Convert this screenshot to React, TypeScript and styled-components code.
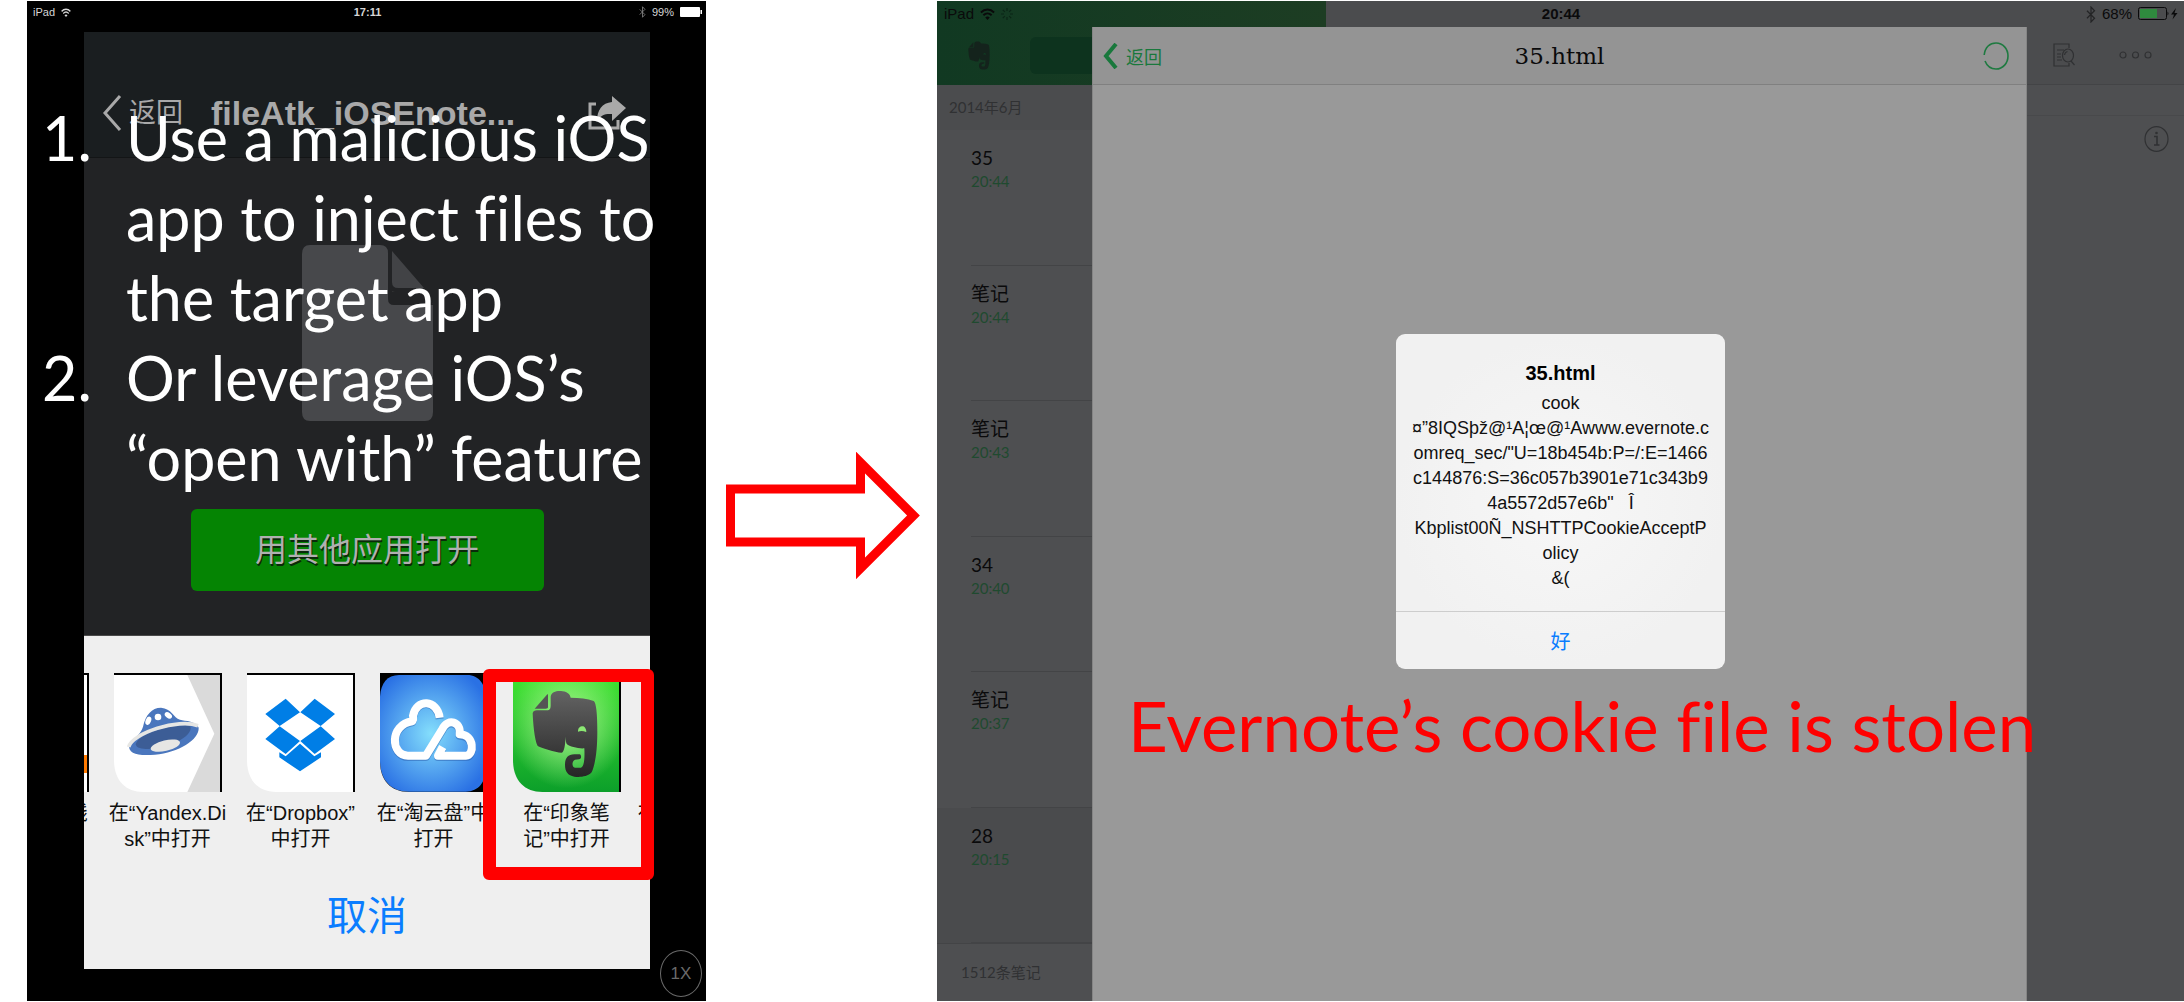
import React from "react";
import styled, { createGlobalStyle } from "styled-components";

const sans = `"Liberation Sans", "Noto Sans CJK SC", sans-serif`;
const humanist = `Lato, "Noto Sans CJK SC", sans-serif`;

const GlobalStyle = createGlobalStyle`
  *, *::before, *::after { box-sizing: border-box; }
  body { margin: 0; background: #fff; font-family: ${sans}; }
  button { border: 0; margin: 0; padding: 0; background: none; font: inherit; color: inherit; cursor: pointer; }
  ol, ul, p, h1, h2 { margin: 0; padding: 0; list-style: none; font-weight: 400; }
  svg { display: block; flex: none; }
`;

const Slide = styled.main`
  min-height: 100vh;
  display: grid;
  grid-template-columns: minmax(0, 679fr) minmax(0, 231fr) minmax(0, 1247fr);
  padding: 1px 0 1px 27px;
`;

/* ---------- status bars ---------- */

const StatusBar = styled.div<{ $size: number; $height: number; $pad: string }>`
  flex: none;
  height: ${(p) => p.$height}px;
  padding: ${(p) => p.$pad};
  display: grid;
  grid-template-columns: 1fr auto 1fr;
  align-items: center;
  font-size: ${(p) => p.$size}px;
  line-height: 16px;
`;

const StatusGroup = styled.div<{ $end?: boolean }>`
  display: flex;
  align-items: center;
  gap: 6px;
  justify-content: ${(p) => (p.$end ? "flex-end" : "flex-start")};
`;

const Clock = styled.strong`
  font-weight: 700;
`;

/* ---------- left tablet ---------- */

const LeftTablet = styled.section`
  position: relative;
  display: flex;
  flex-direction: column;
  background: #000;
  color: #d6d6d6;
  padding-bottom: 32px;
`;

const Phone = styled.div`
  flex: 1;
  margin: 0 56px 0 57px;
  display: flex;
  flex-direction: column;
  background: #222325;
`;

const PhoneHeader = styled.header`
  height: 126px;
  padding: 36px 24px 0 18px;
  display: flex;
  align-items: center;
  background: #1a1e20;
  border-bottom: 1px solid #131516;
  color: #a9a9a9;
`;

const PhoneBack = styled.button`
  flex: none;
  display: flex;
  align-items: center;
  gap: 7px;
  font-size: 27px;
  line-height: 36px;
`;

const PhoneTitle = styled.h1`
  flex: 1;
  margin-left: 28px;
  font-size: 34px;
  line-height: 44px;
  font-weight: 700;
  white-space: nowrap;
`;

const Preview = styled.div`
  flex: 1;
  display: flex;
  flex-direction: column;
  align-items: center;
  padding-top: 87px;
`;

const OpenButton = styled.button`
  margin-top: 88px;
  width: 353px;
  height: 82px;
  padding-bottom: 6px;
  border-radius: 6px;
  background: #058403;
  color: #b0b0b0;
  font-size: 32px;
  text-shadow: 1px 2px 0 #0a2a0a;
`;

const Sheet = styled.div`
  position: relative;
  padding-top: 37px;
  background: #efefef;
  border-top: 1px solid #4a4a4a;
  color: #111;
  display: flex;
  flex-direction: column;
`;

const AppRow = styled.ul`
  display: flex;
  justify-content: center;
  overflow: hidden;
`;

const AppItem = styled.li`
  flex: none;
  width: 133px;
`;

const AppButton = styled.button`
  width: 100%;
  display: flex;
  flex-direction: column;
  align-items: center;
  gap: 8px;
  font-size: 20px;
  line-height: 26px;
  white-space: nowrap;
`;

const Line = styled.span`
  display: block;
`;

const CancelButton = styled.button`
  margin-top: 10px;
  height: 107px;
  padding-bottom: 6px;
  color: #0a7dff;
  font-size: 40px;
`;

const Highlight = styled.div`
  position: absolute;
  top: 33px;
  right: -4px;
  width: 171px;
  height: 211px;
  border: 13px solid #f00;
  border-radius: 6px;
  pointer-events: none;
`;

const ZoomToggle = styled.button`
  position: absolute;
  right: 4px;
  bottom: 4px;
  width: 42px;
  height: 47px;
  border: 1px solid #6a6a6a;
  border-radius: 50%;
  color: #6a6a6a;
  font-size: 17px;
`;

const Steps = styled.ol`
  position: absolute;
  top: 97px;
  left: 15px;
  color: #fff;
  font-family: ${humanist};
  font-size: 61px;
  font-variant-ligatures: none;
  line-height: 80px;
  white-space: nowrap;
  pointer-events: none;
`;

const Step = styled.li`
  display: grid;
  grid-template-columns: 84px auto;
`;

/* ---------- arrow ---------- */

const ArrowCell = styled.div`
  display: flex;
  align-items: center;
  justify-content: center;
  padding: 30px 0 0 2px;
`;

/* ---------- right tablet ---------- */

const RightTablet = styled.section`
  position: relative;
  display: grid;
  grid-template-columns: 389px minmax(0, 1fr);
  grid-template-rows: 84px 1fr;
  background: #4e4f51;
  color: #0a0a0b;
`;

const TabletStatus = styled.div`
  position: absolute;
  inset: 0 0 auto 0;
`;

const GreenBar = styled.div`
  display: flex;
  align-items: center;
  padding: 24px 16px 0 31px;
  gap: 40px;
  background: linear-gradient(90deg, #113922, #1d3d23);
`;

const SearchField = styled.input`
  flex: 1;
  min-width: 0;
  height: 37px;
  border: 0;
  border-radius: 6px;
  background: #0d331e;
`;

const NoteTools = styled.div`
  display: flex;
  align-items: center;
  justify-content: flex-end;
  gap: 44px;
  padding: 24px 32px 0 0;
  background: #4b4c4e;
  border-bottom: 1px solid #434446;
`;

const Sidebar = styled.aside`
  display: flex;
  flex-direction: column;
  font-family: ${humanist};
`;

const MonthHeading = styled.h2`
  height: 45px;
  padding-left: 12px;
  background: #4b4c4e;
  color: #303133;
  font-size: 15px;
  line-height: 45px;
`;

const NoteList = styled.ul`
  flex: 1;
  display: flex;
  flex-direction: column;
`;

const NoteRow = styled.li<{ $dim?: boolean }>`
  flex: 1;
  padding-left: 34px;
  display: flex;
  background: ${(p) => (p.$dim ? "#4a4b4d" : "transparent")};
`;

const NoteText = styled.div`
  flex: 1;
  padding-top: 15px;
  border-bottom: 1px solid #434446;
`;

const NoteTitle = styled.p`
  font-size: 19px;
  line-height: 25px;
`;

const NoteTime = styled.p`
  color: #1f4a2f;
  font-size: 15px;
  line-height: 22px;
`;

const NoteCount = styled.p`
  height: 58px;
  padding-left: 24px;
  border-top: 1px solid #434446;
  color: #303133;
  font-size: 15px;
  line-height: 57px;
`;

const NotePane = styled.div`
  padding-top: 30px;
`;

const NoteMeta = styled.div`
  display: flex;
  justify-content: flex-end;
  padding: 10px 15px;
  border-top: 1px solid #48494b;
  color: #303133;
`;

const IconButton = styled.button`
  display: block;
  color: inherit;
`;

const Modal = styled.article`
  position: absolute;
  inset: 26px 157px 0 155px;
  background: #999;
  border: solid #858585;
  border-width: 0 1px;
`;

const ModalHeader = styled.header`
  height: 58px;
  padding: 0 17px 0 10px;
  display: grid;
  grid-template-columns: 1fr auto 1fr;
  align-items: center;
  background: #949494;
  border-bottom: 1px solid #808080;
`;

const ModalBack = styled.button`
  display: flex;
  align-items: center;
  gap: 8px;
  color: #19783c;
  font-size: 18px;
`;

const ModalTitle = styled.h1`
  padding-left: 7px;
  font-family: "DejaVu Serif", serif;
  font-size: 23px;
  line-height: 32px;
`;

const ModalEnd = styled.div`
  display: flex;
  justify-content: flex-end;
`;

const AlertLayer = styled.div`
  position: absolute;
  inset: 0;
  display: grid;
  place-items: center;
`;

const Alert = styled.div`
  width: 329px;
  border-radius: 9px;
  overflow: hidden;
  background: radial-gradient(circle at 50% 50%, #f7f7f7, #f1f1f1 70%);
  text-align: center;
  color: #111;
`;

const AlertBody = styled.div`
  padding: 24px 0 20px;
  font-size: 18px;
  line-height: 25px;
  white-space: pre;
`;

const AlertTitle = styled.h2`
  padding-bottom: 3px;
  font-size: 20px;
  line-height: 30px;
  font-weight: 700;
  color: #000;
`;

const AlertButton = styled.button`
  display: block;
  width: 100%;
  height: 58px;
  border-top: 1px solid #cdcdcd;
  color: #0a7dff;
  font-size: 20px;
`;

const Caption = styled.p`
  position: absolute;
  left: 191px;
  top: 685px;
  color: #f00;
  font-family: ${humanist};
  font-size: 69px;
  font-variant-ligatures: none;
  line-height: 80px;
  white-space: nowrap;
`;

/* ---------- drawings ---------- */

const Wifi = ({ w, h }: { w: number; h: number }) => (
  <svg width={w} height={h} viewBox="0 0 16 12" preserveAspectRatio="none" fill="none" stroke="currentColor" strokeWidth="2">
    <path d="M1 4.5C5 .6 11 .6 15 4.5M3.6 7.3c2.6-2.4 6.2-2.4 8.8 0" />
    <path d="M8 12 5.6 9.5c1.4-1.2 3.4-1.2 4.8 0z" fill="currentColor" stroke="none" />
  </svg>
);

const Bluetooth = ({ w, h }: { w: number; h: number }) => (
  <svg width={w} height={h} viewBox="0 0 10 16" preserveAspectRatio="none" fill="none" stroke="currentColor" strokeWidth="1.2" opacity=".6">
    <path d="M1 4.5 8.5 11.5 5 15V1l3.500 3.500L1 11.500" />
  </svg>
);

const Activity = () => (
  <svg width="12" height="12" viewBox="0 0 12 12" stroke="#0b2516" strokeWidth="1.200">
    <path d="M6 0v3M6 9v3M0 6h3M9 6h3M1.800 1.800l2 2M8.200 8.200l2 2M10.200 1.800l-2 2M3.800 8.200l-2 2" />
  </svg>
);

const elephantBody =
  "M539 95C541 80 560 76 575 79C590 81 597 88 599 98C625 98 650 101 668 108C676 112 679 150 679 200C679 260 672 300 662 322C650 336 625 337 610 335C590 331 582 320 582 300C582 280 590 268 610 268L626 268C632 270 632 282 624 283L612 284C602 288 602 306 612 308L630 308C638 306 642 285 640 250C625 252 595 245 588 238C585 235 584 225 584 215C583 235 580 262 572 263C550 262 515 250 500 243C490 225 486 170 485 145C487 138 490 136 498 136L528 136C537 136 539 130 539 120Z";
const elephantFold = "M491 131 529 88C531 87 531 88 531 91L531 126C531 130 529 131 524 131Z";
const elephantEye = "M621 200C621 186 630 183 637 184C645 187 648 203 645 201C637 197 628 197 621 200Z";

const Elephant = () => (
  <svg width="22" height="29" viewBox="482 74 200 266" preserveAspectRatio="none">
    <path d={elephantBody} fill="#14231c" />
    <path d={elephantFold} fill="#14231c" />
    <path d={elephantEye} fill="#113922" />
  </svg>
);

const FileGlyph = () => (
  <svg width="131" height="176" viewBox="0 0 131 176">
    <path d="M8 0h70q8 0 8 8v32q0 7 7 7h30l8 12v108q0 9-8 9H8q-8 0-8-9V9q0-9 8-9z" fill="#47484b" />
    <path d="M86 0h4v47h34l7 12v1H92q-6 0-6-6z" fill="#222325" />
    <path d="M90 6 122 43H96q-6 0-6-6z" fill="#424346" />
  </svg>
);

const Share = () => (
  <svg width="38" height="34" viewBox="0 0 38 34">
    <path d="M8 8H2v24h28v-8" fill="none" stroke="#a9a9a9" strokeWidth="3" />
    <path d="M24 0 38 12 24 25v-7c-7-.5-11 1-15 7C9 14 14 7 24 6z" fill="#a9a9a9" />
  </svg>
);

const tile = { width: 108, height: 119 };

const OtherTile = () => (
  <svg {...tile} viewBox="0 0 108 119">
    <path d="M0 0h108v119H30Q0 119 0 85z" fill="#fff" />
    <path d="M80 82h26v18H80z" fill="#ff7a00" />
    <path d="M0 1h107v118" fill="none" stroke="#000" strokeWidth="2" />
  </svg>
);

const YandexTile = () => (
  <svg {...tile} viewBox="27 24 324 357">
    <path d="M27 24H351V381H115C60 381 27 345 27 285Z" fill="#fff" />
    <path d="M247 30H346V381H247L328 206Z" fill="#dadada" />
    <path d="M27 27H348V381" fill="none" stroke="#000" strokeWidth="6" />
    <path d="M72 236C90 220 108 205 114 185C122 150 140 128 168 128C200 130 205 158 225 164C240 168 275 168 281 188C283 225 220 262 150 269C100 273 68 268 72 236Z" fill="#4a76bd" />
    <path d="M92 238C100 200 230 170 256 184C266 215 190 250 130 252C110 252 94 250 92 238Z" fill="#3c5d96" />
    <path d="M71 246C82 204 220 160 279 182" fill="none" stroke="#e6e6e4" strokeWidth="11" />
    <ellipse cx="181" cy="242" rx="45" ry="16" transform="rotate(-13 181 242)" fill="#e6e6e4" />
    <ellipse cx="130" cy="167" rx="8" ry="13" transform="rotate(22 130 167)" fill="#fff" />
    <circle cx="159" cy="156" r="10" fill="#fff" />
    <ellipse cx="190" cy="151" rx="12" ry="8" transform="rotate(35 190 151)" fill="#fff" />
  </svg>
);

const DropboxTile = () => (
  <svg {...tile} viewBox="426 24 324 357">
    <path d="M426 24H750V381H514C459 381 426 345 426 285Z" fill="#fff" />
    <path d="M426 27H747V381" fill="none" stroke="#000" strokeWidth="6" />
    <g fill="#007ee6">
      <path d="M542 101 585 142 524 183 481 147ZM629 101 690 147 647 183 586 142ZM524 184 585 228 542 267 481 222ZM647 184 690 222 629 267 586 228Z" />
      <path d="M585 236 628 274 648 262V277L585 319 523 277V262L542 274Z" />
    </g>
  </svg>
);

const CloudTile = () => (
  <svg {...tile} viewBox="28 24 324 357">
    <defs>
      <radialGradient id="cloudSky" cx="48%" cy="50%" r="60%">
        <stop offset="0" stopColor="#84defc" />
        <stop offset="1" stopColor="#2a71e4" />
      </radialGradient>
    </defs>
    <path d="M28 24H352V381H28Z" fill="#000" />
    <path d="M85 30H290C325 30 345 60 345 95V310C345 350 325 380 285 380H115C60 380 28 345 28 285V95C30 55 50 30 85 30Z" fill="url(#cloudSky)" />
    <path d="M28 290C28 345 60 381 115 381H28Z" fill="#efefef" />
    <g fill="none" strokeWidth="24" strokeLinejoin="round">
      <path d="M207 162C200 105 137 102 127 155Q129 164 125 172C55 182 60 276 112 276H166L215 196C232 162 272 174 267 212C312 212 312 276 286 276H202L216 250" stroke="#2b5fae" opacity=".5" />
      <path d="M207 158C200 103 137 100 127 152Q129 162 125 169C55 179 60 272 112 272H166L215 192C232 158 272 170 267 208C312 208 312 272 286 272H202L216 246" stroke="#fff" />
    </g>
  </svg>
);

const EvernoteTile = () => (
  <svg {...tile} viewBox="426 24 324 357">
    <defs>
      <linearGradient id="leaf" x1="0" y1="0" x2="0" y2="1">
        <stop offset="0" stopColor="#42e632" />
        <stop offset="1" stopColor="#0c9f2a" />
      </linearGradient>
      <radialGradient id="leafGlow" cx="50%" cy="42%" r="55%">
        <stop offset="0" stopColor="#b6fa98" stopOpacity=".95" />
        <stop offset="1" stopColor="#b6fa98" stopOpacity="0" />
      </radialGradient>
      <linearGradient id="hide" x1="0" y1="0" x2="0" y2="1">
        <stop offset="0" stopColor="#636363" />
        <stop offset="1" stopColor="#262626" />
      </linearGradient>
    </defs>
    <path d="M426 24H750V381H514C459 381 426 345 426 285Z" fill="url(#leaf)" />
    <path d="M426 24H750V381H514C459 381 426 345 426 285Z" fill="url(#leafGlow)" />
    <path d="M426 27H747V381" fill="none" stroke="#000" strokeWidth="6" />
    <path d={elephantBody} fill="url(#hide)" />
    <path d={elephantFold} fill="#555" />
    <path d={elephantEye} fill="#8be873" />
  </svg>
);

const Battery99 = () => (
  <svg width="22" height="10" viewBox="0 0 22 10" fill="#fff">
    <rect width="20" height="10" rx="1" />
    <rect x="20.500" y="3" width="1.500" height="4" />
  </svg>
);

const Battery68 = () => (
  <svg width="40" height="14" viewBox="0 0 40 14">
    <rect x=".5" y=".5" width="28" height="12" rx="2" fill="none" stroke="#0a0a0b" />
    <rect x="2" y="2" width="17" height="9" fill="#2f8a3e" />
    <path d="M29.500 4.500q2 2 0 4z" fill="#0a0a0b" />
    <path d="M38 1 33 7.500h3L34.500 12.500 39.500 6h-3z" fill="#0a0a0b" />
  </svg>
);

const Chevron = ({ w, h, sw }: { w: number; h: number; sw: number }) => (
  <svg width={w} height={h} viewBox={`0 0 ${w} ${h}`} fill="none" stroke="currentColor" strokeWidth={sw}>
    <path d={`M${w - 2} 1 3 ${h / 2} ${w - 2} ${h - 1}`} />
  </svg>
);

/* ---------- data ---------- */

const apps = [
  { tile: <OtherTile />, lines: ["在“搜狐在线", "”中打开"] },
  { tile: <YandexTile />, lines: ["在“Yandex.Di", "sk”中打开"] },
  { tile: <DropboxTile />, lines: ["在“Dropbox”", "中打开"] },
  { tile: <CloudTile />, lines: ["在“淘云盘”中", "打开"] },
  { tile: <EvernoteTile />, lines: ["在“印象笔", "记”中打开"] },
  { tile: <OtherTile />, lines: ["在“Foxmail”中", "打开"] },
];

const steps = [
  ["Use a malicious iOS", "app to inject files to", "the target app"],
  ["Or leverage iOS’s", "“open with” feature"],
];

const notes = [
  { title: "35", time: "20:44" },
  { title: "笔记", time: "20:44" },
  { title: "笔记", time: "20:43" },
  { title: "34", time: "20:40" },
  { title: "笔记", time: "20:37" },
  { title: "28", time: "20:15", dim: true },
];

const alertLines = [
  "cook",
  "¤”8IQSþž@¹A¦œ@¹Awww.evernote.c",
  'omreq_sec/"U=18b454b:P=/:E=1466',
  "c144876:S=36c057b3901e71c343b9",
  '4a5572d57e6b"   Î',
  "Kbplist00Ñ_NSHTTPCookieAcceptP",
  "olicy",
  "&(",
];

export default function App() {
  return (
    <>
      <GlobalStyle />
      <Slide>
        <LeftTablet>
          <StatusBar $size={11} $height={31} $pad="0 4px 9px 6px">
            <StatusGroup>
              iPad
              <Wifi w={10} h={9} />
            </StatusGroup>
            <Clock>17:11</Clock>
            <StatusGroup $end>
              <Bluetooth w={7} h={12} />
              99%
              <Battery99 />
            </StatusGroup>
          </StatusBar>

          <Phone>
            <PhoneHeader>
              <PhoneBack>
                <Chevron w={20} h={36} sw={3} />
                返回
              </PhoneBack>
              <PhoneTitle>fileAtk_iOSEnote...</PhoneTitle>
              <IconButton aria-label="Share">
                <Share />
              </IconButton>
            </PhoneHeader>
            <Preview>
              <FileGlyph />
              <OpenButton>用其他应用打开</OpenButton>
            </Preview>
            <Sheet>
              <AppRow>
                {apps.map((app, i) => (
                  <AppItem key={i}>
                    <AppButton>
                      {app.tile}
                      <span>
                        {app.lines.map((line) => (
                          <Line key={line}>{line}</Line>
                        ))}
                      </span>
                    </AppButton>
                  </AppItem>
                ))}
              </AppRow>
              <CancelButton>取消</CancelButton>
              <Highlight />
            </Sheet>
          </Phone>

          <ZoomToggle>1X</ZoomToggle>

          <Steps>
            {steps.map((lines, i) => (
              <Step key={i}>
                <span>{i + 1}.</span>
                <span>
                  {lines.map((line) => (
                    <Line key={line}>{line}</Line>
                  ))}
                </span>
              </Step>
            ))}
          </Steps>
        </LeftTablet>

        <ArrowCell>
          <svg width="194" height="128" viewBox="726 452 194 128">
            <path d="M730.500 489H860.500V462.500L913.500 515.500 860.500 568.500V542H730.500Z" fill="#fff" stroke="#f00" strokeWidth="9" />
          </svg>
        </ArrowCell>

        <RightTablet>
          <GreenBar>
            <Elephant />
            <SearchField aria-label="Search notes" />
          </GreenBar>
          <NoteTools>
            <IconButton aria-label="Find in note">
              <svg width="22" height="24" viewBox="0 0 22 24" fill="none" stroke="#303133" strokeWidth="1.200">
                <path d="M16 5V1H1v22h15v-3M4 7h7M4 11h4M4 14h4M4 17h5M18 18l3.500 4" />
                <ellipse cx="15" cy="12.500" rx="5.500" ry="6.500" />
                <path d="M11.500 12q.5-3 3-3.500" />
              </svg>
            </IconButton>
            <IconButton aria-label="More">
              <svg width="33" height="10" viewBox="0 0 33 10" fill="none" stroke="#303133" strokeWidth="1.200">
                <circle cx="4" cy="5" r="3" />
                <circle cx="16.500" cy="5" r="3" />
                <circle cx="29" cy="5" r="3" />
              </svg>
            </IconButton>
          </NoteTools>

          <Sidebar>
            <MonthHeading>2014年6月</MonthHeading>
            <NoteList>
              {notes.map((note, i) => (
                <NoteRow key={i} $dim={note.dim}>
                  <NoteText>
                    <NoteTitle>{note.title}</NoteTitle>
                    <NoteTime>{note.time}</NoteTime>
                  </NoteText>
                </NoteRow>
              ))}
            </NoteList>
            <NoteCount>1512条笔记</NoteCount>
          </Sidebar>

          <NotePane>
            <NoteMeta>
              <IconButton aria-label="Note info">
                <svg width="25" height="26" viewBox="0 0 25 26" fill="none" stroke="currentColor" strokeWidth="1.200">
                  <ellipse cx="12.500" cy="13" rx="11.500" ry="12.400" />
                  <path d="M10 10.500h3V18.500M10 19h5.500" strokeWidth="1.600" />
                  <circle cx="12.500" cy="7" r="1.300" fill="currentColor" stroke="none" />
                </svg>
              </IconButton>
            </NoteMeta>
          </NotePane>

          <Modal>
            <ModalHeader>
              <ModalBack>
                <Chevron w={15} h={26} sw={4} />
                返回
              </ModalBack>
              <ModalTitle>35.html</ModalTitle>
              <ModalEnd>
                <svg width="26" height="28" viewBox="0 0 26 28" fill="none" stroke="#1e7a40" strokeWidth="1.600">
                  <path d="M1.200 13C2 5 7 1 13 1C20 1 25 7 25 14C25 21 20 27 13 27C8 27 4 24 2 19" />
                </svg>
              </ModalEnd>
            </ModalHeader>
          </Modal>

          <TabletStatus>
            <StatusBar $size={15} $height={26} $pad="0 6px 0 7px">
              <StatusGroup>
                iPad
                <Wifi w={15} h={12} />
                <Activity />
              </StatusGroup>
              <Clock>20:44</Clock>
              <StatusGroup $end>
                <Bluetooth w={10} h={17} />
                68%
                <Battery68 />
              </StatusGroup>
            </StatusBar>
          </TabletStatus>

          <AlertLayer>
            <Alert role="alertdialog" aria-label="35.html">
              <AlertBody>
                <AlertTitle>35.html</AlertTitle>
                {alertLines.map((line) => (
                  <Line key={line}>{line}</Line>
                ))}
              </AlertBody>
              <AlertButton>好</AlertButton>
            </Alert>
          </AlertLayer>

          <Caption>Evernote’s cookie file is stolen</Caption>
        </RightTablet>
      </Slide>
    </>
  );
}
